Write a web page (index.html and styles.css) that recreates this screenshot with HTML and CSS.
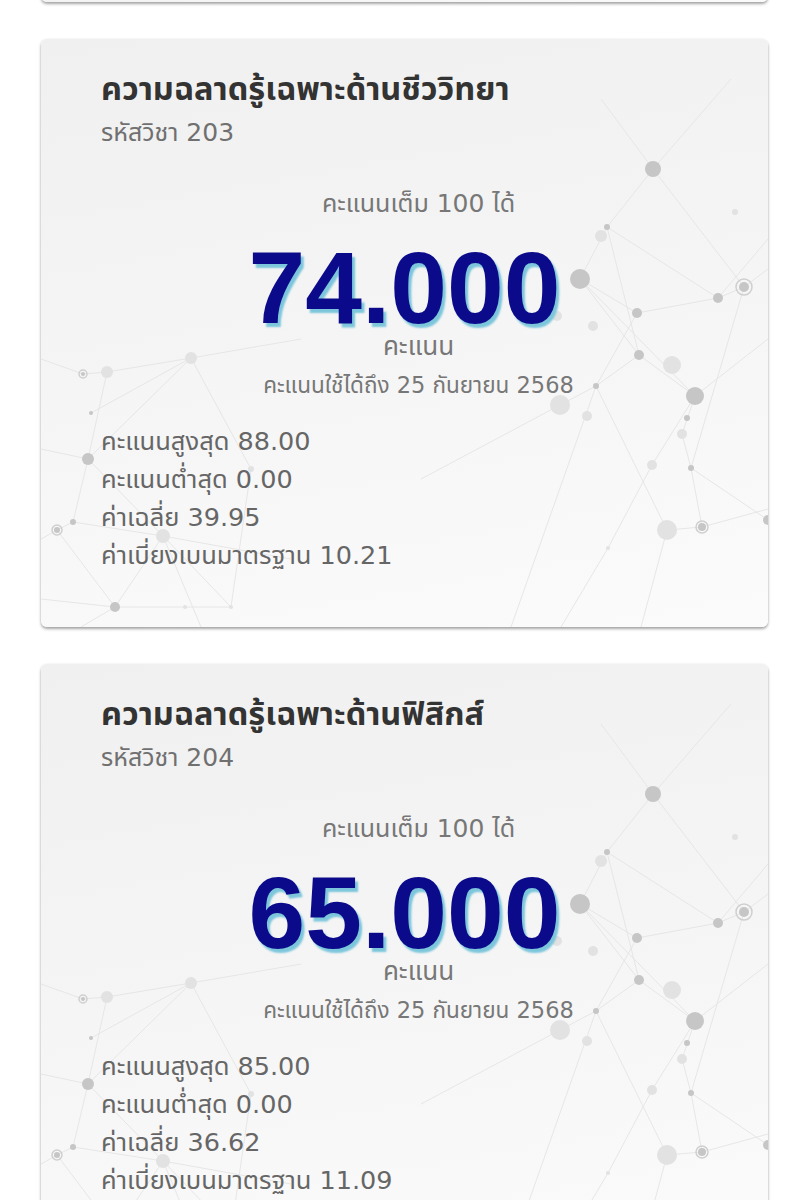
FILE: index.html
```html
<html>
<head>
<meta charset="utf-8">
<title>ผลคะแนน</title>
<link rel="stylesheet" href="styles.css">
</head>
<body>

<!-- shared network backdrop for every score card -->
<svg class="defs" width="0" height="0">
  <defs>
    <symbol id="net" viewBox="0 0 727 588">
      <g class="lines">
        <path d="M612 130 L566 188 L539 240 L596 274 L677 259 L703 248"/>
        <path d="M612 130 L703 248 L727 230"/>
        <path d="M566 188 L677 259 M566 188 L598 316 L654 357"/>
        <path d="M539 240 L598 316 L555 347 L519 366"/>
        <path d="M539 240 L654 357 L727 300 M654 357 L641 395 L650 429"/>
        <path d="M596 274 L555 347 L626 491 L661 488 L727 470"/>
        <path d="M654 357 L611 426 L567 509 L520 588"/>
        <path d="M703 248 L650 429 L661 488 M650 429 L727 481"/>
        <path d="M612 130 L560 60 M612 130 L690 40 M677 259 L727 200"/>
        <path d="M555 347 L470 588 M626 491 L600 588 M519 366 L380 440"/>
        <path d="M42 335 L66 333 L150 319 L260 300 M0 320 L42 335"/>
        <path d="M66 333 L47 420 L32 483 L16 491 L0 500"/>
        <path d="M150 319 L47 420 L122 497 L74 568 L40 588"/>
        <path d="M47 420 L0 410 M50 374 L150 319 M122 497 L190 568 L144 568 L74 568"/>
        <path d="M32 483 L122 497 L250 520 M122 497 L160 588 M16 491 L74 568"/>
        <path d="M150 319 L210 430 L190 568 M0 560 L74 568"/>
      </g>
      <g class="dots">
        <circle cx="612" cy="130" r="8"/>
        <circle cx="566" cy="188" r="3"/>
        <circle class="soft" cx="560" cy="197" r="6"/>
        <circle cx="539" cy="240" r="10"/>
        <circle cx="596" cy="274" r="5"/>
        <circle cx="677" cy="259" r="5"/>
        <circle cx="703" cy="248" r="5"/>
        <circle class="ring" cx="703" cy="248" r="8"/>
        <circle cx="598" cy="316" r="5"/>
        <circle class="soft" cx="631" cy="326" r="9"/>
        <circle cx="555" cy="347" r="3"/>
        <circle cx="654" cy="357" r="9"/>
        <circle cx="646" cy="379" r="3"/>
        <circle class="soft" cx="641" cy="395" r="5"/>
        <circle cx="650" cy="429" r="3"/>
        <circle class="soft" cx="611" cy="426" r="5"/>
        <circle class="soft" cx="626" cy="491" r="10"/>
        <circle cx="661" cy="488" r="4"/>
        <circle class="ring" cx="661" cy="488" r="6"/>
        <circle cx="727" cy="481" r="5"/>
        <circle class="soft" cx="567" cy="509" r="2"/>
        <circle class="soft" cx="519" cy="366" r="10"/>
        <circle class="soft" cx="546" cy="377" r="5"/>
        <circle class="soft" cx="516" cy="277" r="5"/>
        <circle class="soft" cx="552" cy="287" r="5"/>
        <circle class="soft" cx="694" cy="173" r="3"/>
        <circle cx="42" cy="335" r="2"/>
        <circle class="ring" cx="42" cy="335" r="4"/>
        <circle class="soft" cx="66" cy="333" r="6"/>
        <circle class="soft" cx="150" cy="319" r="6"/>
        <circle cx="50" cy="374" r="2"/>
        <circle cx="47" cy="420" r="6"/>
        <circle cx="32" cy="483" r="3"/>
        <circle cx="16" cy="491" r="3"/>
        <circle class="ring" cx="16" cy="491" r="5"/>
        <circle class="soft" cx="122" cy="497" r="7"/>
        <circle cx="74" cy="568" r="5"/>
        <circle class="soft" cx="144" cy="568" r="2"/>
        <circle class="soft" cx="190" cy="568" r="2"/>
        <circle class="soft" cx="210" cy="430" r="3"/>
      </g>
    </symbol>
  </defs>
</svg>

<div class="page">

  <div class="card prev"></div>

  <div class="card">
    <svg class="bg"><use href="#net"/></svg>
    <div class="card-body">
      <div class="subject">ความฉลาดรู้เฉพาะด้านชีววิทยา</div>
      <div class="code">รหัสวิชา 203</div>
      <div class="result">
        <div class="full">คะแนนเต็ม 100 ได้</div>
        <div class="score">74.000</div>
        <div class="unit">คะแนน</div>
        <div class="expire">คะแนนใช้ได้ถึง 25 กันยายน 2568</div>
      </div>
      <div class="stats">
        <div>คะแนนสูงสุด 88.00</div>
        <div>คะแนนต่ำสุด 0.00</div>
        <div>ค่าเฉลี่ย 39.95</div>
        <div>ค่าเบี่ยงเบนมาตรฐาน 10.21</div>
      </div>
    </div>
  </div>

  <div class="card">
    <svg class="bg"><use href="#net"/></svg>
    <div class="card-body">
      <div class="subject">ความฉลาดรู้เฉพาะด้านฟิสิกส์</div>
      <div class="code">รหัสวิชา 204</div>
      <div class="result">
        <div class="full">คะแนนเต็ม 100 ได้</div>
        <div class="score">65.000</div>
        <div class="unit">คะแนน</div>
        <div class="expire">คะแนนใช้ได้ถึง 25 กันยายน 2568</div>
      </div>
      <div class="stats">
        <div>คะแนนสูงสุด 85.00</div>
        <div>คะแนนต่ำสุด 0.00</div>
        <div>ค่าเฉลี่ย 36.62</div>
        <div>ค่าเบี่ยงเบนมาตรฐาน 11.09</div>
      </div>
    </div>
  </div>

</div>
</body>
</html>
```

FILE: styles.css
```css
body {
  margin: 0;
  background: #ffffff;
  font-family: "DejaVu Sans", "Noto Sans Thai", "Noto Sans", sans-serif;
  color: #666666;
}

.defs {
  position: absolute;
  width: 0;
  height: 0;
}

.page {
  padding: 0 32px 0 41px;
  display: flex;
  flex-direction: column;
  gap: 37px;
}

.card {
  position: relative;
  overflow: hidden;
  height: 588px;
  border-radius: 6px;
  background: linear-gradient(170deg, #f0f0f0 0%, #f5f5f5 50%, #fbfbfb 100%);
  box-shadow: 0 2px 3px rgba(0, 0, 0, 0.35), 0 0 2px rgba(0, 0, 0, 0.08);
}

.card.prev {
  height: 60px;
  margin-top: -58px;
}

.bg {
  position: absolute;
  left: 0;
  top: 0;
  width: 727px;
  height: 588px;
}

.lines path {
  fill: none;
  stroke: #e6e6e6;
  stroke-width: 1;
}

.dots circle {
  fill: #c6c6c6;
}

.dots circle.soft {
  fill: #e2e2e2;
}

.dots circle.ring {
  fill: none;
  stroke: #cfcfcf;
  stroke-width: 1.5;
}

.card-body {
  position: relative;
  padding: 32px 40px 0 60px;
}

.subject {
  font-family: "Noto Sans Thai", "Noto Sans", sans-serif;
  font-size: 32.5px;
  font-weight: bold;
  color: #333333;
  line-height: 40px;
}

.code {
  font-size: 25px;
  line-height: 44px;
  color: #707070;
}

.result {
  text-align: center;
  margin-top: 31px;
  margin-left: -60px;
  margin-right: -40px;
}

.full {
  font-size: 25px;
  line-height: 36px;
  color: #777777;
  padding-left: 28px;
}

.score {
  font-family: "Liberation Sans", Arial, sans-serif;
  font-weight: bold;
  font-size: 102px;
  line-height: 96px;
  margin-top: 18px;
  color: #0a0a8a;
  text-shadow: 3px 4px 2px #7cc6dc;
}

.unit {
  font-size: 26px;
  line-height: 24px;
  margin-top: -2px;
  color: #777777;
  padding-left: 28px;
}

.expire {
  font-size: 22.5px;
  line-height: 30px;
  margin-top: 12px;
  color: #777777;
  padding-left: 28px;
}

.stats {
  margin-top: 22px;
  font-size: 25.5px;
  line-height: 38px;
  color: #666666;
}
```
